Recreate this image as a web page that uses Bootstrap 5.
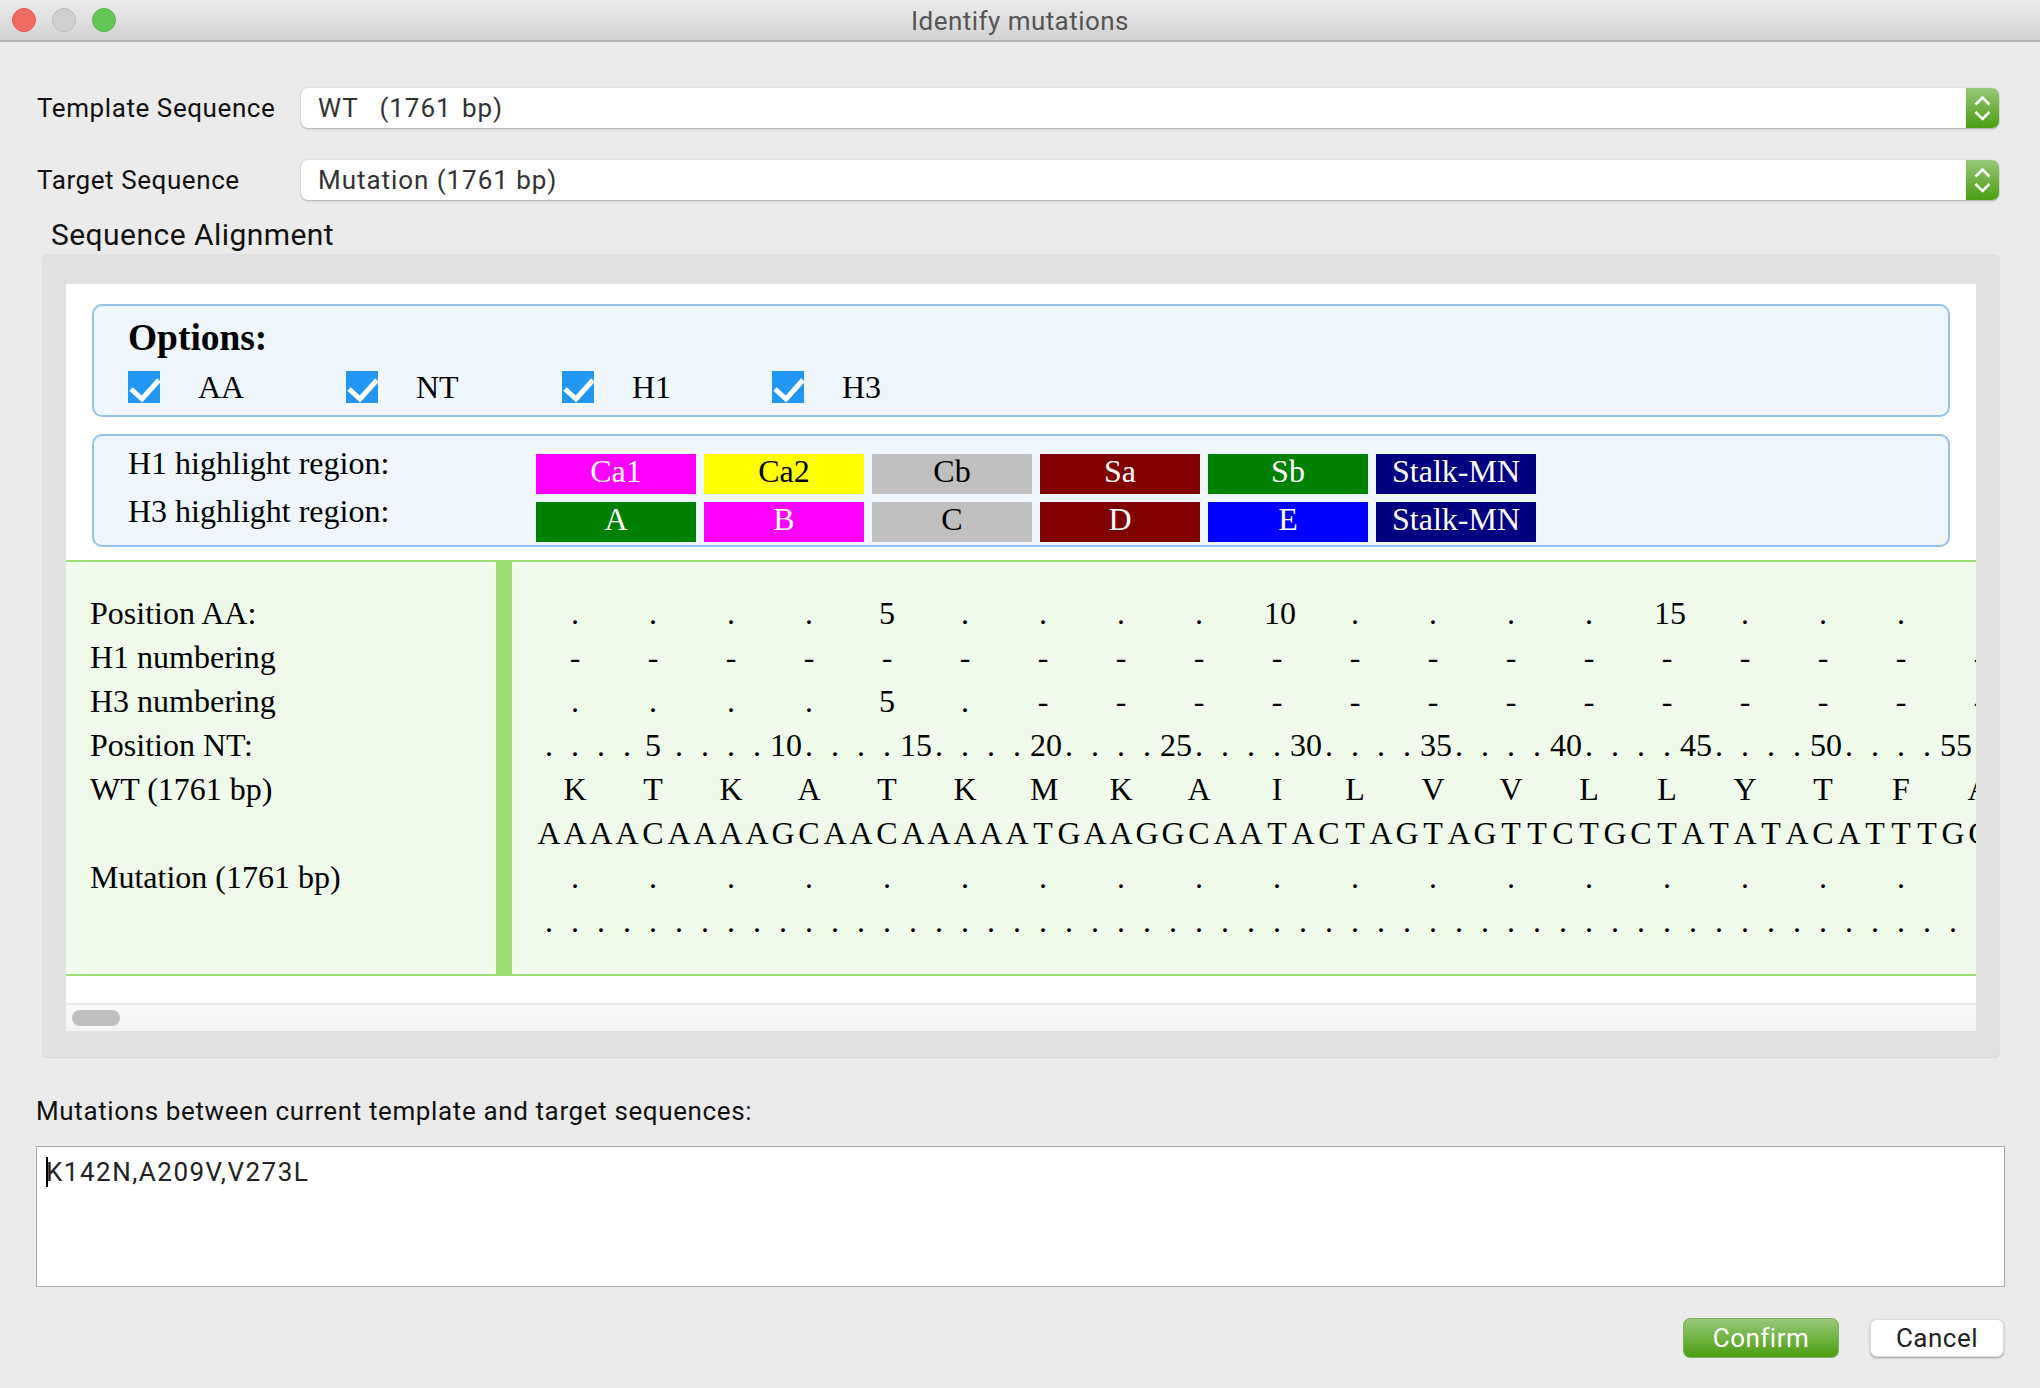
<!DOCTYPE html>
<html lang="en">
<head>
  <meta charset="UTF-8">
  <title>Identify mutations</title>
  <link href="https://cdn.jsdelivr.net/npm/bootstrap@5.3.0/dist/css/bootstrap.min.css" rel="stylesheet">
  <style>
    body { background: #ebebeb; font-family: Roboto, "Liberation Sans", sans-serif; font-size: 26px; color: #111; margin: 0; }
    .win { width: 2040px; height: 1388px; overflow: hidden; }
    .title-bar { height: 42px; background: linear-gradient(#ececec, #d2d2d2); border-bottom: 2px solid #b4b4b4; color: #555; line-height: 42px; letter-spacing: .45px; }
    .light { width: 24px; height: 24px; border-radius: 50%; }
    .light-red { background: #ee6b60; border: 1px solid #dd5c52; }
    .light-off { background: #d0d0d0; border: 1px solid #bcbcbc; }
    .light-green { background: #62c654; border: 1px solid #55b548; }
    .lights { gap: 16px; left: 12px; top: 8px; }
    .seq-fields { padding: 46px 41px 0 37px; gap: 32px; }
    .seq-label { width: 264px; letter-spacing: .58px; padding-top: 1px; }
    .seq-select { height: 40px; border-radius: 7px; box-shadow: 0 1px 2px #aaa, 0 0 1px #bbb; overflow: hidden; padding-left: 17px; letter-spacing: .95px; color: #333; }
    .wt-gap { word-spacing: 3px; }
    .stepper { width: 33px; height: 40px; background: linear-gradient(#97c878, #4a9e10); }
    .stepper svg, .tick svg { display: block; }
    .group-title { margin-left: 51px; height: 54px; padding-top: 12px; font-size: 30px; line-height: 46px; letter-spacing: .45px; color: #111; }
    .group-box { margin-left: 42px; width: 1958px; height: 803px; background: #e1e1e1; border-radius: 6px; padding: 30px 24px 26px; box-shadow: 0 1px 1px #d4d4d4; }
    .web-view { height: 747px; overflow: hidden; font-family: "Liberation Serif", serif; font-size: 32px; color: #000; }
    .opt-box { margin: 0 26px; height: 113px; background: #eff6fe; border: 2px solid #94c2f0; border-radius: 10px; padding-left: 34px; }
    .opt-box-first { margin-top: 20px; margin-bottom: 17px; padding-top: 10px; }
    .opt-title { font-size: 37.44px; font-weight: 700; line-height: 44px; margin-bottom: 5px; }
    .opt-row { height: 44px; line-height: 44px; }
    .tick { width: 32px; height: 32px; background: #2196f3; display: block; }
    .opt-item { width: 218px; gap: 38px; }
    .opt-item-b { width: 216px; }
    .opt-item-c { width: 210px; }
    .hl-labels { width: 408px; line-height: 48px; padding-top: 3px; }
    .hl-chips { padding-top: 18px; gap: 8px; }
    .chip-row { gap: 8px; }
    .chip { width: 160px; height: 40px; line-height: 34px; text-align: center; }
    .c-mag { background: #f0f; color: #fff; }
    .c-yel { background: #ff0; color: #000; }
    .c-sil { background: #c0c0c0; color: #000; }
    .c-mar { background: #800000; color: #fff; }
    .c-gre { background: #008000; color: #fff; }
    .c-nav { background: #000080; color: #fff; }
    .c-blu { background: #00f; color: #fff; }
    .align-box { margin-top: 13px; height: 416px; background: #effaeb; border-top: 2px solid #9cde74; border-bottom: 2px solid #9cde74; }
    .align-names { width: 430px; flex: none; padding: 29px 0 0 24px; line-height: 44px; }
    .align-bar { width: 16px; flex: none; background: #9cde74; }
    .align-seq { padding: 29px 0 0 24px; overflow: hidden; flex: 1; line-height: 44px; }
    .seq-line { height: 44px; white-space: nowrap; display: flex; }
    .seq-cell { width: 26px; flex: none; text-align: center; }
    .h-gap { height: 27px; }
    .h-scroll { height: 28px; background: linear-gradient(#fafafa, #f4f4f4); border-top: 2px solid #e8e8e8; padding: 5px 0 0 6px; }
    .h-thumb { width: 48px; height: 16px; background: #c0c0c0; border-radius: 8px; }
    .mut-label { padding: 37px 0 0 36px; height: 89px; line-height: 34px; letter-spacing: .62px; }
    .mut-field { margin-left: 36px; width: 1969px; height: 141px; border: 1px solid #a8a8a8; padding: 6px 0 0 9px; line-height: 38px; letter-spacing: 1.5px; color: #222; }
    .caret-bar { display: inline-block; width: 2px; height: 30px; background: #000; margin-right: -2px; vertical-align: -6px; }
    .btn-row { padding: 31px 36px 0 0; gap: 31px; }
    .btn.btn-confirm { width: 156px; height: 40px; padding: 0; font-size: 26px; line-height: 38px; letter-spacing: .5px; color: #fff; border: 1px solid #7fb060; border-radius: 7px; background: linear-gradient(#97c878, #4a9e10); }
    .btn.btn-dismiss { width: 134px; height: 38px; margin-top: 1px; padding: 0; font-size: 26px; line-height: 36px; letter-spacing: .5px; color: #222; border: 1px solid #ddd; border-radius: 7px; background: #fff; box-shadow: 0 1px 2px #999; }
  </style>
</head>
<body>
  <div class="win">
    <div class="title-bar position-relative text-center">
      Identify mutations
      <div class="lights d-flex position-absolute">
        <div class="light light-red"></div>
        <div class="light light-off"></div>
        <div class="light light-green"></div>
      </div>
    </div>

    <div class="seq-fields d-flex flex-column">
      <div class="d-flex align-items-center">
        <div class="seq-label">Template Sequence</div>
        <div class="seq-select bg-white flex-grow-1 d-flex justify-content-between align-items-center">
          <span class="wt-gap">WT&nbsp; (1761 bp)</span>
          <span class="stepper"><svg width="33" height="40" viewBox="0 0 33 40" fill="none" stroke="#fff" stroke-width="2.6"><path d="M9.5 16.5 16.5 9.5 23.5 16.5M9.5 24 16.5 31 23.5 24"/></svg></span>
        </div>
      </div>
      <div class="d-flex align-items-center">
        <div class="seq-label">Target Sequence</div>
        <div class="seq-select bg-white flex-grow-1 d-flex justify-content-between align-items-center">
          <span>Mutation (1761 bp)</span>
          <span class="stepper"><svg width="33" height="40" viewBox="0 0 33 40" fill="none" stroke="#fff" stroke-width="2.6"><path d="M9.5 16.5 16.5 9.5 23.5 16.5M9.5 24 16.5 31 23.5 24"/></svg></span>
        </div>
      </div>
    </div>

    <div class="group-title">Sequence Alignment</div>
    <div class="group-box">
      <div class="web-view bg-white d-flex flex-column">
        <div class="opt-box opt-box-first">
          <div class="opt-title">Options:</div>
          <div class="opt-row d-flex align-items-center">
            <div class="opt-item d-flex align-items-center"><span class="tick"><svg width="32" height="32" viewBox="0 0 32 32" fill="none" stroke="#fff" stroke-width="5"><path d="M3 18 14 28 31 9"/></svg></span><span>AA</span></div>
            <div class="opt-item opt-item-b d-flex align-items-center"><span class="tick"><svg width="32" height="32" viewBox="0 0 32 32" fill="none" stroke="#fff" stroke-width="5"><path d="M3 18 14 28 31 9"/></svg></span><span>NT</span></div>
            <div class="opt-item opt-item-c d-flex align-items-center"><span class="tick"><svg width="32" height="32" viewBox="0 0 32 32" fill="none" stroke="#fff" stroke-width="5"><path d="M3 18 14 28 31 9"/></svg></span><span>H1</span></div>
            <div class="opt-item d-flex align-items-center"><span class="tick"><svg width="32" height="32" viewBox="0 0 32 32" fill="none" stroke="#fff" stroke-width="5"><path d="M3 18 14 28 31 9"/></svg></span><span>H3</span></div>
          </div>
        </div>
        <div class="opt-box d-flex flex-shrink-0">
          <div class="hl-labels">
            <div>H1 highlight region:</div>
            <div>H3 highlight region:</div>
          </div>
          <div class="hl-chips d-flex flex-column">
            <div class="chip-row d-flex">
              <div class="chip c-mag">Ca1</div><div class="chip c-yel">Ca2</div><div class="chip c-sil">Cb</div><div class="chip c-mar">Sa</div><div class="chip c-gre">Sb</div><div class="chip c-nav">Stalk-MN</div>
            </div>
            <div class="chip-row d-flex">
              <div class="chip c-gre">A</div><div class="chip c-mag">B</div><div class="chip c-sil">C</div><div class="chip c-mar">D</div><div class="chip c-blu">E</div><div class="chip c-nav">Stalk-MN</div>
            </div>
          </div>
        </div>
        <div class="align-box d-flex flex-shrink-0">
          <div class="align-names">
            <div>Position AA:</div>
            <div>H1 numbering</div>
            <div>H3 numbering</div>
            <div>Position NT:</div>
            <div>WT (1761 bp)</div>
            <div>&nbsp;</div>
            <div>Mutation (1761 bp)</div>
          </div>
          <div class="align-bar"></div>
          <div class="align-seq" id="seqRows"></div>
        </div>
        <div class="h-gap flex-shrink-0"></div>
        <div class="h-scroll flex-shrink-0"><div class="h-thumb"></div></div>
      </div>
    </div>

    <div class="mut-label">Mutations between current template and target sequences:</div>
    <div class="mut-field bg-white"><span class="caret-bar"></span>K142N,A209V,V273L</div>
    <div class="btn-row d-flex justify-content-end align-items-start">
      <button type="button" class="btn btn-confirm">Confirm</button>
      <button type="button" class="btn btn-dismiss">Cancel</button>
    </div>
  </div>

  <script>
    const nt = 'AAAACAAAAGCAACAAAAATGAAGGCAATACTAGTAGTTCTGCTATATACATTTGC';
    const aa = 'KTKATKMKAILVVLLYTFA';

    // amino acid rows sit on the middle base of each codon
    function codons(fn) {
      const cells = [];
      for (let i = 0; i < aa.length; i++) cells.push('', fn(i), '');
      return cells;
    }
    const numbered = i => (i + 1) % 5 === 0 ? String(i + 1) : '.';

    const rows = [
      codons(numbered),
      codons(() => '-'),
      codons(i => i < 4 || i === 5 ? '.' : i === 4 ? '5' : '-'),
      nt.split('').map((c, i) => numbered(i)),
      codons(i => aa[i]),
      nt.split(''),
      codons(() => '.'),
      nt.split('').map(() => '.')
    ];

    document.getElementById('seqRows').innerHTML = rows.map(r =>
      '<div class="seq-line">' + r.map(c => `<span class="seq-cell">${c}</span>`).join('') + '</div>'
    ).join('');
  </script>
  <script src="https://cdn.jsdelivr.net/npm/bootstrap@5.3.0/dist/js/bootstrap.bundle.min.js"></script>
</body>
</html>
